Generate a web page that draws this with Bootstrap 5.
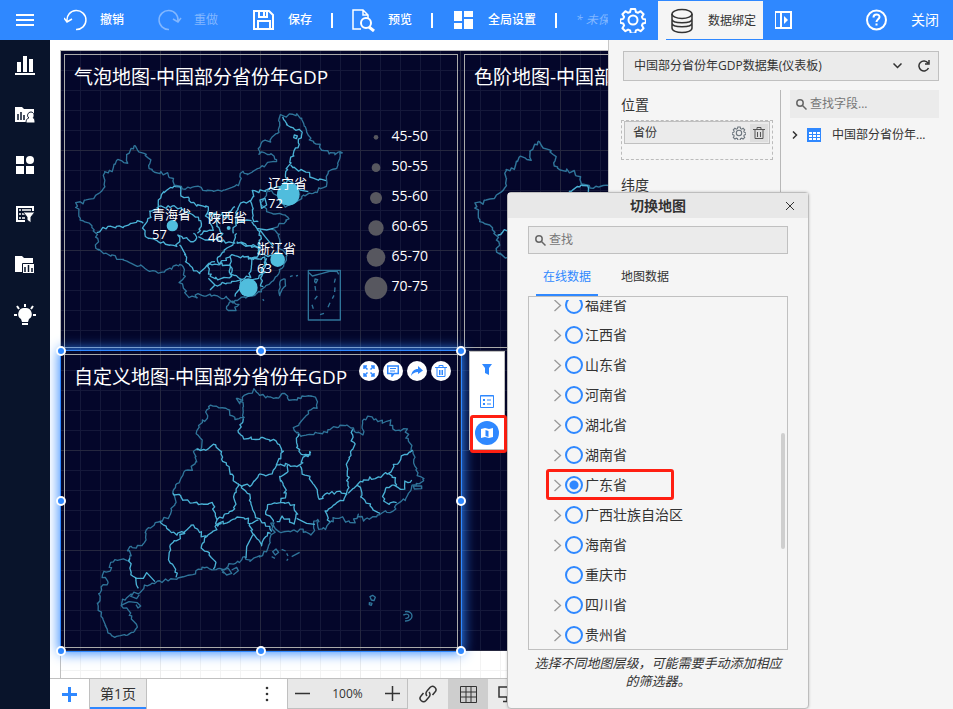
<!DOCTYPE html>
<html lang="zh-CN">
<head>
<meta charset="utf-8">
<meta name="viewport" content="width=device-width, initial-scale=1">
<title>仪表板设计器</title>
<link href="https://cdn.jsdelivr.net/npm/bootstrap@5.3.0/dist/css/bootstrap.min.css" rel="stylesheet">
<style>
:root{--blue:#2f88ff;--panel:#f5f5f5;--line:#c0c0c0;--field:#ebebeb}
body{font-family:"Open Sans","Noto Sans CJK SC",sans-serif;font-size:12px;line-height:18px;color:#333;background:#fff}
button{border:0;background:none;padding:0;color:inherit;font-size:inherit}
svg{display:block;flex:none}
.ic{fill:none;stroke:currentColor;stroke-width:2}
.topbar{height:40px;background:var(--blue);color:#fff}
.tools{min-width:0}
.menu-btn{width:50px;margin-right:14px}
.tool{gap:12px;flex:none;font-weight:500}
.tool.off{color:#82b7ff;font-weight:400}
.gap-tools{gap:34px}
.vsep{width:2px;height:15px;background:#fff;margin:0 19px;flex:none}
.side-w{width:345px}
.gear-btn{width:50px}
.bind-tab{background:var(--panel);color:#333;width:105px;padding:0 7px 0 11px;margin-top:1px;position:relative}
.bind-tab::after{content:"";position:absolute;left:8px;right:0;bottom:0;height:1px;background:var(--blue)}
.exit-btn{margin:0 14px 0 24px}
.rail{width:50px;background:#09142b;color:#fff}
.rail button{height:50px}
.below,.work,.stage{min-width:0;min-height:0}
.stage{padding:10px 0 0 10px}
.board{height:100%;min-width:800px;border-left:1px solid var(--line);border-top:1px solid var(--line);background-image:linear-gradient(90deg,#ececec 1px,transparent 1px),linear-gradient(#ececec 1px,transparent 1px),linear-gradient(90deg,#f3f3f3 1px,transparent 1px),linear-gradient(#f3f3f3 1px,transparent 1px);background-size:100px 100px,100px 100px,20px 20px,20px 20px;background-position:-1px -1px}
.tiles{display:grid;grid-template-columns:repeat(2,400px);grid-auto-rows:300px;width:801px;margin:-1px 0 0 -1px;background-color:#04062a;background-image:linear-gradient(90deg,#25273f 1px,transparent 1px),linear-gradient(#25273f 1px,transparent 1px),linear-gradient(90deg,#15183a 1px,transparent 1px),linear-gradient(#15183a 1px,transparent 1px);background-size:100px 100px,100px 100px,20px 20px,20px 20px;box-shadow:inset 1px 1px #bbb;padding-bottom:1px;color:#fff}
.tile{position:relative;padding:4px 2px 2px 4px}
.frame{border:1px solid #aaa;height:100%;padding:9px}
.tile h2{font-size:19px;line-height:26px;font-weight:400;margin:0;white-space:nowrap}
.chart{position:absolute;left:0;top:0;width:100%;height:100%}
.outer,.inner{fill:none;stroke:#2f7499;stroke-width:4;stroke-linejoin:round}
.inner{stroke:#4ab2d6}
.bub{fill:#50bddd}
.pin{position:absolute;font-size:13px;line-height:20px;white-space:nowrap}
.legend{position:absolute;right:32px;top:71px;font-size:14px}
.legend li{height:30px}
.sel{position:absolute;inset:1px -1px -1px 1px;outline:1px solid var(--blue);box-shadow:0 0 12px 2px var(--blue);pointer-events:none;z-index:2}
.knob{position:absolute;width:10px;height:10px;border-radius:50%;background:var(--blue);border:2px solid #fff;transform:translate(-50%,-50%)}
.acts{position:absolute;right:9px;top:11px;gap:4px;z-index:3}
.acts button{width:20px;height:20px;border-radius:50%;background:#fff;color:var(--blue)}
.float-bar{position:absolute;left:409px;top:1px;width:36px;border:1px solid var(--line);background:#fff;color:var(--blue);z-index:3;padding:1px 0 0}
.float-bar button{height:32px}
.float-bar .on{width:24px;height:24px;border-radius:50%;background:var(--blue);color:#fff;margin:4px 0}
.redbox{position:absolute;border:3px solid #ff1f12;border-radius:3px;pointer-events:none}
.float-bar .redbox{left:0;right:-3px;top:63px;height:38px}
.footbar{height:31px;border-top:1px solid var(--line);background:#fff}
.footbar>*{flex:none}
.add-btn{width:39px;color:var(--blue)}
.page-tab{width:58px;background:#e8e8e8;border:1px solid var(--line);border-width:0 1px;box-shadow:inset 0 -2px var(--blue);font-size:14px}
.more-btn{margin-left:118px;padding-right:18px}
.zoombar{width:121px;background:#e8e8e8;border:1px solid var(--line);border-top:0;padding:0 7px}
.cell{width:40px;background:#ebebeb}
.cell.on{background:#cecece}
.footbar .rest{flex:1}
.panel{background:var(--panel);border-left:1px solid #c8c8c8;padding:11px 14px 0}
.source{height:30px;background:var(--field);border:1px solid var(--line);padding-right:8px}
.source select{appearance:none;border:0;background:none;color:#333;padding:0 10px;min-width:0}
.lab{font-size:14px;line-height:20px}
.fields{width:160px;margin:9px 0 0 -2px;border-right:1px solid #b8b8b8;padding-top:5px;flex:none}
.drop{border:1px dashed #bbb;height:40px;margin:5px 7px 15px 0;padding:0 2px}
.chip{height:23px;background:var(--field);border:1px solid var(--line);padding:0 1px 0 8px}
.chip .bin{width:18px;height:18px;background:#dedede;color:#555}
.tree{padding:9px 0 0 9px;min-width:0}
.tree-row{padding:8px 0 0 2px;overflow:hidden}
.srch{background:var(--field);height:28px;padding:0 6px;gap:3px;color:#666}
.srch input{border:0;background:none;min-width:0;width:100%;outline:0;padding:0}
.srch input::placeholder{color:#777;opacity:1}
.dlg{position:absolute;right:144px;top:192px;bottom:0;width:302px;background:var(--panel);border:1px solid #bdbdbd;border-radius:4px;box-shadow:0 0 3px #0003;z-index:10}
.dlg-h{height:25px;background:#e8e8e8;font-size:14px;padding:0 14px 0 22px}
.dlg-b{padding:8px 20px 0;min-height:0}
.dlg-b .srch{border:1px solid var(--line)}
.tabs{height:42px;padding-left:8px;gap:23px}
.tabs button{padding-top:4px}
.tabs .cur{width:62px;color:var(--blue);border-bottom:2px solid var(--blue);padding-top:6px}
.listbox{border:1px solid var(--line);height:354px;padding-top:3px;position:relative}
.provs{overflow:hidden;height:100%}
.provs ul{margin:-10px 0 0}
.provs li{height:30px;padding-left:24px;font-size:14px;color:#333;position:relative}
.provs svg{width:10px;margin-right:2px;stroke-width:1.300;color:#999}
.provs input{appearance:none;width:18px;height:18px;border:2px solid var(--blue);border-radius:50%;margin:0 2px 0 0;flex:none}
.provs input:checked{background:radial-gradient(circle,var(--blue) 4px,transparent 5px)}
.provs .redbox{left:17px;width:128px;top:-1px;height:31px}
.thumb{position:absolute;right:2px;top:136px;width:4px;height:116px;border-radius:2px;background:#cfcfcf}
.note{font-size:13px;font-style:italic;text-align:center;margin:4px}
.thin{stroke-width:1}
.mid{stroke-width:1.500}
</style>
<script src="https://cdn.jsdelivr.net/npm/bootstrap@5.3.0/dist/js/bootstrap.bundle.min.js"></script>
</head>
<body class="vh-100 d-flex flex-column overflow-hidden position-relative">

<header class="topbar d-flex">
  <div class="tools d-flex align-items-center flex-fill overflow-hidden text-nowrap">
    <button class="menu-btn d-flex justify-content-center flex-shrink-0" aria-label="菜单"><svg class="ic" width="18" height="14"><path d="M0 2h18M0 7h18M0 12h18"/></svg></button>
    <div class="d-flex gap-tools">
      <button class="tool d-flex align-items-center"><svg class="ic mid" width="24" height="24"><path d="M3 13A9.500 9.500 0 1 1 12 21.500M0 10l3 4 5-3"/></svg>撤销</button>
      <button class="tool off d-flex align-items-center"><svg class="ic mid" width="24" height="24"><path d="M20 13A9.500 9.500 0 1 0 11 21.500M15 11l5 3 3-4"/></svg>重做</button>
      <button class="tool d-flex align-items-center"><svg class="ic" width="24" height="24"><path d="M2 3h15l4 4v14H2zM6 21v-8h12v8M7 3v6h8V3M12 4v4"/></svg>保存</button>
    </div>
    <span class="vsep"></span>
    <button class="tool d-flex align-items-center"><svg class="ic mid" width="24" height="24"><path d="M9 21H1V2h10l5 5v3M11 2v5h5"/><circle cx="14" cy="15" r="5" stroke-width="2"/><path d="M17 19l5 4" stroke-width="3"/></svg>预览</button>
    <span class="vsep"></span>
    <button class="tool d-flex align-items-center"><svg width="24" height="24" fill="currentColor"><path d="M2 3h8v10H2zM2 15h8v6H2zM12 3h9v6h-9zM12 11h9v10h-9z"/></svg>全局设置</button>
    <span class="vsep"></span>
    <em class="tool off">* 未保存</em>
  </div>
  <div class="side-w d-flex flex-shrink-0">
    <button class="gear-btn d-flex align-items-center justify-content-center" aria-label="设置"><svg class="ic" width="26" height="26"><circle cx="13" cy="13" r="4.500"/><path d="M10.800 2h4.400l.7 3 2 .8 2.700-1.600 3 3-1.700 2.700.9 2 3 .7v3.200l-3 .7-.9 2 1.700 2.700-3 3-2.700-1.600-2 .8-.7 3h-4.400l-.7-3-2-.8-2.700 1.600-3-3 1.700-2.700-.9-2-3-.7v-3.200l3-.7.9-2-1.700-2.700 3-3 2.700 1.600 2-.8z" stroke-linejoin="round"/></svg></button>
    <button class="bind-tab d-flex align-items-center justify-content-between"><svg class="ic mid" width="26" height="26"><ellipse cx="13" cy="6" rx="10" ry="4.500"/><path d="M3 6v14c0 6 20 6 20 0V6M3 11c0 5 20 5 20 0M3 15c0 5 20 5 20 0"/></svg>数据绑定</button>
    <button class="d-flex align-items-center ps-2 ms-1" aria-label="收起面板"><svg class="ic" width="18" height="18"><path d="M0 1h16v16H0zM6 1v16"/><path d="M9 5l4 4-4 4z" fill="currentColor" stroke="none"/></svg></button>
    <button class="d-flex align-items-center ms-auto" aria-label="帮助"><svg class="ic" width="21" height="22"><circle cx="10.500" cy="11" r="9.500"/><path d="M7.500 8.500c0-4 6-4 6-.5 0 2-3 2.500-3 5M10.500 14.500v2"/></svg></button>
    <button class="exit-btn lab">关闭</button>
  </div>
</header>

<div class="below d-flex flex-fill">
  <nav class="rail d-flex flex-column flex-shrink-0">
    <button class="d-flex align-items-center justify-content-center" aria-label="图表"><svg width="20" height="20" fill="currentColor"><path d="M0 18h20v2H0zM2 7h4v10H2zM8 1h4v16H8zM14 4h4v13h-4z"/></svg></button>
    <button class="d-flex align-items-center justify-content-center" aria-label="我的图表"><svg width="20" height="20" fill="currentColor"><path d="M0 2h7l2 2h10v13H0z"/><path d="M3 9v6M6 7v8M9 10v5" stroke="#09142b" stroke-width="1.500"/><path d="M11 18c0-4 2-5 3-5-3-2-1-6 2-6s4 4 2 6c1 0 2 1 2 5z" stroke="#09142b"/></svg></button>
    <button class="d-flex align-items-center justify-content-center" aria-label="组件"><svg width="20" height="20" fill="currentColor"><path d="M1 1h8v8H1zM1 11h8v8H1zM11 11h8v8h-8z"/><circle cx="15" cy="5" r="4"/></svg></button>
    <button class="d-flex align-items-center justify-content-center" aria-label="筛选"><svg class="ic" width="20" height="20"><path d="M18 6V2H2v14h8"/><path d="M4 5h2M7 5h9M4 9h2M7 9h3M4 13h2M7 13h3" stroke-width="1.500"/><path d="M8 7h12l-4 5v6l-4-3v-3z" fill="currentColor" stroke="#09142b" stroke-width="1"/></svg></button>
    <button class="d-flex align-items-center justify-content-center" aria-label="资源"><svg width="22" height="20" fill="currentColor"><path d="M1 1h7l2 2h9v14H1z"/><path d="M8.500 8.500h12v10h-12z" stroke="#09142b"/><path d="M11 12v5M14.500 10v7M18 13v4" stroke="#09142b" stroke-width="1.500"/></svg></button>
    <button class="d-flex align-items-center justify-content-center" aria-label="提示"><svg width="24" height="24" fill="currentColor"><path d="M12 5a6 6 0 0 0-4 11l1 3h6l1-3a6 6 0 0 0-4-11zM9 20h6v2H9z"/><path d="M12 1v3M1 12h3M20 12h3M4 3l2 3M20 3l-2 3" stroke="currentColor" stroke-width="2"/></svg></button>
  </nav>

  <main class="work flex-fill d-flex flex-column">
    <div class="stage flex-fill overflow-hidden">
      <div class="board">
        <div class="tiles">
          <section class="tile">
            <div class="frame"><h2>气泡地图-中国部分省份年GDP</h2></div>
            <svg class="chart" viewBox="0 -150 1200 900" aria-hidden="true">
              <defs>
                <g id="cn" class="border-lines">
                  <path class="outer" d="M222 137l7 0 2 13 14 2 20 20 5 13-2 23 22 7 28 7 24 21 0 15 33 6 43-2 37 15 55-11 22-8 9-18-1-20 8-5 12 7 20-9 30-11 20-15 20-3-2-14-16-8-20-4-17 2 13-38 17 5 15-17 15-20 0-30 8-12 22-2 25-1 18 17 12 23 12 40 23 5 20 25 25 10 27-13-7 23-15 35-20 2-7 20 2 30-20 3-10 15-20-3-20 13-10 10-20 15-20 3-20-8-5-20-25-20-20 30-10 10 20 20 25 15 15-5 30 12-30 23-20 10 15 20 10 25-10 15 20 10 5 25-10 20-15 15-15 25-30 25-20 15-30 10-20 5-22 13-13-15-40-3-15-5-40 0 0 13-15-8-15 3-2-18-18-25 12-15-2-40-25 5-45 18-30-5-20-8-10-10-30 0-15-12-50-18-35-20 2-40-12-15-10-17-30-18 0-15-15-15 5-12 50-18 30-22 7-18-7-37 28-5 10-33 32 5 3-25z"/>
                  <path class="outer" d="M660 545l15-10-3 25-12 23-5-13zM505 615l15-10 15 7-10 20-17 3-8-10zM608 598l4 4M690 530l8-3M708 528l6-2"/>
                  <path class="inner" d="M110 398l20-13 20-3 30-2 35-10 20-5 15 5M342 258l-22 10-20 22-10 35-25 10 5 20-20 17 5 33 15 13 30 7 40 15 12-5 6-30 17 10 15 10 25-15-15-10M290 325l40-7 30 7 35 20 25 15 8 15-16 25M342 258l13 4 7 18 8 10 15 0 10 20 30 8 20 0-5 27 10 15M668 50l7 20 25 20 20 0 8 10-13 25-5 25-20 30 2 15-14 10 4 35M692 195l23 17 30 3 15 20 38 7M682 240l18 10 20 20 25 5M682 240l-22 22-35 3-25 10-20-5-5 30 5 30-5 30 20 5M600 300l15-5 5 20-15 10zM703 105l9 3-3 8-8-3zM575 300l-30 10-15 30-5 35-5 25M525 370l35-10 15 2M525 320l-30 35-15-15-10 35 20 25-25 20 25 5 30 5 10-30M440 340l25 5-15 25 10 20-20 5-20 10M575 365l25 25 0 30-10 20-35-5-25-10M590 385l30 5 20-5M600 390l15 20 25 30M600 420l-5 35 25 15 30-15M530 430l60 10 10 25-30 10-50-10-10 5-30 20-15-10 10-15 25-15 20-20M510 470l5 55 25 10 30-5 2-55 48 0-20 55-25 10M445 495l35-5 30 10 2 30-32 10-30-10zM358 435l12 5 8 50 17 10 20 20 15-20 15-10 20-5M415 410l20 10 30 0M445 535l20 20-15 15M465 555l47-10 28-5 5 20-20 30M620 475l-10 45-10 40 10 0"/>
                </g>
              </defs>
              <use href="#cn"/>
              <path d="M745 511h96v149h-96z" class="outer"/>
              <path d="M747 518l10 10 30-8 25-7 20 2 4 8M765 537l8 2-5 10-4-4zM765 558l2 14M772 588l-8 10M756 614l4 12M826 536l-3 12M825 562l-1 14M822 586l-5 10M810 608l-6 14M792 640l-12 4" class="outer"/>
              <g class="bub"><circle cx="685" cy="283" r="34"/><circle cx="337" cy="377" r="17"/><circle cx="506" cy="384" r="6"/><circle cx="653" cy="479" r="22"/><circle cx="565" cy="563" r="28"/></g>
              <g fill="#57575f"><circle cx="948" cy="112" r="7"/><circle cx="948" cy="203" r="13"/><circle cx="948" cy="294" r="18"/><circle cx="948" cy="384" r="23"/><circle cx="948" cy="472" r="28"/><circle cx="948" cy="564" r="34"/></g>
            </svg>
            <div class="pin" style="left:208px;top:123px">辽宁省<br>72</div>
            <div class="pin" style="left:92px;top:154px">青海省<br>57</div>
            <div class="pin" style="left:148px;top:157px">陕西省<br>46</div>
            <div class="pin" style="left:197px;top:188px">浙江省<br>63</div>
            <ul class="legend list-unstyled mb-0">
              <li class="d-flex align-items-center">45-50</li><li class="d-flex align-items-center">50-55</li><li class="d-flex align-items-center">55-60</li><li class="d-flex align-items-center">60-65</li><li class="d-flex align-items-center">65-70</li><li class="d-flex align-items-center">70-75</li>
            </ul>
          </section>
          <section class="tile">
            <div class="frame"><h2>色阶地图-中国部分省份年GDP</h2></div>
            <svg class="chart" viewBox="0 0 1200 900" aria-hidden="true"><use href="#cn" transform="translate(-6 126) scale(1.08)"/></svg>
          </section>
          <section class="tile">
            <div class="frame"><h2>自定义地图-中国部分省份年GDP</h2></div>
            <svg class="chart" viewBox="30 30 1200 900" aria-hidden="true">
              <g class="border-lines">
              <path class="outer" d="M558 175L580 178 595 160 610 150 625 158 640 172 670 174 690 170 700 157 708 160 712 182 760 172 780 163 800 180 805 190 795 205 765 225 750 255 730 268 745 280 755 290 790 280 820 278 850 265 890 252 908 268 930 280 945 282 935 260 940 240 955 232 980 240 1000 248 1018 240 1035 272 1070 268 1072 290 1088 330 1095 370 1105 405 1123 418 1110 430 1085 440 1070 475 1040 488 1035 512 990 520 960 535 940 540 922 525 910 550 885 540 865 530 840 545 825 568 805 565 805 535 790 545 790 580 770 580 760 568 720 575 690 583 675 560 665 545 672 575 655 610 650 635 620 655 595 663 582 650 570 665 545 670 530 685 490 687 470 678 445 690 430 705 375 715 320 727 290 735 270 755 240 765 215 785 212 797 235 805 245 830 255 850 262 862 250 880 215 888 180 890 175 870 160 845 150 815 143 795 150 765 158 735 175 728 155 700 180 690 185 665 235 658 240 640 235 620 275 620 285 600 285 570 330 545 360 525 375 485 368 460 385 425 410 390 425 388 440 365 432 330 455 328 455 300 440 275 450 250 468 240 475 195 535 203 550 235 580 235 580 190 560 185z"/>
              <path class="outer" d="M212 797l25-12 25 3 10 10-8 6-6-10M240 768l20 8 8-12M515 690l20-5 10 15-15 5zM545 690l15-8 5 10-15 12M522 700l-6-5M668 635l10-8 8 10-10 8zM695 628l12 5M710 640l4 8M665 650l10 5M725 650l24-13M710 662l4-5M960 770l8-4 8 6-4 10-8-2zM958 788l8 2-2 6-6-2zM1090 438l25 0 0 8-22 1z"/>
              <path class="outer" d="M1065 815c28-5 28 30 0 28M1060 825l6-2c14-4 14 14 0 12"/>
              <path class="inner" d="M580 235L565 275 585 295 650 293 680 305 698 335 680 375 718 375M680 375L660 405 630 403 600 435 575 440M440 330L470 333 488 310 508 330 520 365 540 385 550 420 575 440 600 470 615 525 640 545 665 575M565 430L550 465 555 505 500 540M368 460L390 465 395 480 450 490 488 490 497 535 505 560 515 550M330 545L360 570 375 582 405 575 425 553 445 565 455 585 470 590 495 570 505 548 545 545 560 530 590 535 600 550 625 540M405 578L365 610 357 655 375 690 378 712M470 590L455 605 455 625 480 640 495 665 490 687M240 655L237 690 255 715 265 745M255 715L280 715 290 698 315 725M600 550L608 580 635 615 645 585 662 580M608 585L590 620 588 655M745 282L740 320 750 340 770 345 785 332 775 345 765 350 750 378 718 375M714 375L712 395 688 415 705 440 705 465 690 487 650 495 650 520 670 545M690 487L730 495 740 520 735 550 700 530 680 545M740 535L770 550 795 553M750 378L752 395 785 420 800 450 815 480 830 460 880 455 892 463M908 268L905 290 912 320 890 370 895 410 892 463 870 485 825 515 840 545M1088 330L1060 345 1035 375 1015 400 975 412 940 420 920 435 895 460M920 435L935 450 935 475 960 490 965 510 990 520M1015 400L1040 415 1040 440 1060 445 1065 425 1085 420M1040 440L1010 440 1000 480 1015 495 1040 488"/>
              </g>
            </svg>
            <div class="sel"><i class="knob" style="left:0;top:0"></i><i class="knob" style="left:50%;top:0"></i><i class="knob" style="left:100%;top:0"></i><i class="knob" style="left:0;top:50%"></i><i class="knob" style="left:100%;top:50%"></i><i class="knob" style="left:0;top:100%"></i><i class="knob" style="left:50%;top:100%"></i><i class="knob" style="left:100%;top:100%"></i></div>
            <div class="acts d-flex">
              <button class="d-flex align-items-center justify-content-center" aria-label="放大"><svg class="ic mid" width="12" height="12"><path d="M1 4V1h3M8 1h3v3M11 8v3H8M4 11H1V8M1 1l3.500 3.500M11 1L7.500 4.500M11 11L7.500 7.500M1 11l3.500-3.500"/></svg></button>
              <button class="d-flex align-items-center justify-content-center" aria-label="批注"><svg class="ic" width="12" height="12"><path class="mid" d="M.7 1h10.600v7.500H7L5 11V8.500H.7z"/><path class="thin" d="M3 3.500h6M3 6h5"/></svg></button>
              <button class="d-flex align-items-center justify-content-center" aria-label="分享"><svg width="12" height="12" fill="currentColor"><path d="M7 1l5 4.500L7 9V7C4 7 2 8 0 11 1 6 3 4 7 4z"/></svg></button>
              <button class="d-flex align-items-center justify-content-center" aria-label="删除"><svg class="ic thin" width="12" height="12"><path d="M0 2.500h12M4 2V.5h4V2M2 3v8.500h8V3M4.500 5v5M6 5v5M7.500 5v5"/></svg></button>
            </div>
            <div class="float-bar d-flex flex-column align-items-center">
              <button class="d-flex align-items-center" aria-label="筛选器"><svg width="10" height="11" fill="currentColor"><path d="M0 0h10L7 4v7L3 9V4z"/></svg></button>
              <button class="d-flex align-items-center" aria-label="图例"><svg class="ic thin" width="14" height="14"><path d="M.5 1.500h13v12H.5zM.5 2h13M7 6h4M7 10h4"/><path d="M3 6h2M3 10h2" stroke-width="2"/></svg></button>
              <button class="on d-flex align-items-center justify-content-center" aria-label="切换地图"><svg width="12" height="12" fill="currentColor"><path d="M0 2l4-1 4 1 4-1v9l-4 1-4-1-4 1zM4.500 3v6l3 1V4z" fill-rule="evenodd"/></svg></button>
              <span class="redbox"></span>
            </div>
          </section>
        </div>
      </div>
    </div>
    <footer class="footbar d-flex overflow-hidden">
      <button class="add-btn d-flex align-items-center justify-content-center" aria-label="新增页"><svg class="ic" width="15" height="15"><path d="M0 7.500h15M7.500 0v15" stroke-width="3"/></svg></button>
      <button class="page-tab">第1页</button>
      <button class="more-btn d-flex align-items-center" aria-label="更多"><svg width="4" height="16" fill="currentColor"><circle cx="2" cy="2" r="1.300"/><circle cx="2" cy="8" r="1.300"/><circle cx="2" cy="14" r="1.300"/></svg></button>
      <div class="zoombar d-flex align-items-center justify-content-between">
        <button aria-label="缩小"><svg class="ic mid" width="15" height="15"><path d="M0 7.500h15"/></svg></button><span>100%</span><button aria-label="放大"><svg class="ic mid" width="15" height="15"><path d="M0 7.500h15M7.500 0v15"/></svg></button>
      </div>
      <button class="cell d-flex align-items-center justify-content-center" aria-label="链接"><svg class="ic mid" width="18" height="18"><path d="M8 11a3.500 3.500 0 0 1 0-5l3-3.500a3.200 3.200 0 0 1 5 4.500l-2.500 3M10 7a3.500 3.500 0 0 1 0 5l-3 3.500a3.200 3.200 0 0 1-5-4.500l2.500-3"/></svg></button>
      <button class="cell on d-flex align-items-center justify-content-center" aria-label="网格"><svg class="ic thin" width="17" height="17"><path d="M.5.500h16v16H.5zM.5 6h16M.5 11h16M6 .5v16M11 .5v16"/></svg></button>
      <button class="cell rest d-flex align-items-center ps-2" aria-label="屏幕"><svg class="ic mid" width="20" height="17"><path d="M3 1h16v10H3zM11 11v4M7 15.500h8"/></svg></button>
    </footer>
  </main>

  <aside class="panel side-w flex-shrink-0 d-flex flex-column">
    <div class="source d-flex align-items-center">
      <select class="flex-fill" aria-label="数据集"><option>中国部分省份年GDP数据集(仪表板)</option></select>
      <svg class="ic mid" width="9" height="6"><path d="M.5.500l4 4 4-4"/></svg>
      <button class="ms-3" aria-label="刷新"><svg class="ic mid" width="12" height="14"><path d="M10.500 9a5 5 0 1 1-.5-5M11 1v4H7"/></svg></button>
    </div>
    <div class="d-flex flex-fill">
      <div class="fields">
        <div class="lab">位置</div>
        <div class="drop"><div class="chip d-flex align-items-center">省份
          <button class="ms-auto me-1" aria-label="字段设置"><svg class="ic text-secondary" width="14" height="14" viewBox="0 0 26 26"><circle cx="13" cy="13" r="5"/><path d="M10.800 2h4.400l.7 3 2 .8 2.700-1.600 3 3-1.700 2.700.9 2 3 .7v3.200l-3 .7-.9 2 1.700 2.700-3 3-2.700-1.600-2 .8-.7 3h-4.400l-.7-3-2-.8-2.700 1.600-3-3 1.700-2.700-.9-2-3-.7v-3.200l3-.7.9-2-1.700-2.700 3-3 2.700 1.600 2-.8z"/></svg></button>
          <button class="bin d-flex align-items-center justify-content-center" aria-label="移除字段"><svg class="ic thin" width="12" height="12"><path d="M0 2.500h12M4 2V.5h4V2M2 3v8.500h8V3M4.500 5v5M7.500 5v5"/></svg></button></div></div>
        <div class="lab">纬度</div>
      </div>
      <div class="tree flex-fill">
        <label class="srch d-flex align-items-center"><svg class="ic mid" width="11" height="11"><circle cx="4" cy="4" r="3.200"/><path d="M6.500 6.500l4 4"/></svg><input type="text" placeholder="查找字段..." aria-label="查找字段"></label>
        <div class="tree-row d-flex align-items-center text-nowrap"><svg class="ic mid" width="6" height="8"><path d="M1 .5l3.500 3.500L1 7.500"/></svg><svg class="ms-2" width="26" height="14"><path d="M1 0h14v14H1z" fill="#2f88ff"/><path d="M3 4h3v2H3zM7 4h3v2H7zM11 4h3v2h-3zM3 7h3v2H3zM7 7h3v2H7zM11 7h3v2h-3zM3 10h3v2H3zM7 10h3v2H7zM11 10h3v2h-3z" fill="#fff"/></svg>中国部分省份年...</div>
      </div>
    </div>
  </aside>
</div>

<div class="dlg d-flex flex-column" role="dialog" aria-labelledby="dlgTitle">
  <div class="dlg-h d-flex align-items-center flex-shrink-0"><span id="dlgTitle" class="flex-fill text-center fw-semibold">切换地图</span>
    <button aria-label="关闭窗口"><svg class="ic thin" width="8" height="8"><path d="M0 0l8 8M8 0L0 8"/></svg></button></div>
  <div class="dlg-b">
    <label class="srch d-flex align-items-center"><svg class="ic mid" width="11" height="11"><circle cx="4" cy="4" r="3.200"/><path d="M6.500 6.500l4 4"/></svg><input type="text" placeholder="查找" aria-label="查找"></label>
    <div class="tabs d-flex"><button class="cur">在线数据</button><button>地图数据</button></div>
    <div class="listbox"><div class="provs"><ul class="list-unstyled" id="provs"></ul></div><span class="thumb"></span></div>
    <p class="note">选择不同地图层级，可能需要手动添加相应的筛选器。</p>
  </div>
</div>

<script>
const names = ["福建省","江西省","山东省","河南省","湖北省","湖南省","广东省","广西壮族自治区","海南省","重庆市","四川省","贵州省"];
document.getElementById("provs").innerHTML = names.map((n, i) => {
  const arrow = n === "重庆市" ? "" : '<path d="M1.500 1l6 5.500-6 5.500"/>';
  const on = n === "广东省";
  return `<li class="d-flex align-items-center"><svg class="ic" height="13">${arrow}</svg><input type="radio" name="prov" id="p${i}"${on ? " checked" : ""}><label for="p${i}">${n}</label>${on ? '<span class="redbox"></span>' : ""}</li>`;
}).join("");

// Roughen the simplified boundaries: each piece is resampled and nudged by a repeatable noise.
const noise = n => { const s = Math.sin(n * 12.9898) * 43758.5453; return (s - Math.floor(s) - .5) * 10; };
const probe = document.createElementNS("http://www.w3.org/2000/svg", "path");
document.querySelectorAll(".border-lines path").forEach(path => {
  const pieces = path.getAttribute("d").split("M").filter(Boolean);
  path.setAttribute("d", pieces.map(piece => {
    probe.setAttribute("d", "M" + piece);
    const len = probe.getTotalLength();
    if (len < 90) return "M" + piece;
    const steps = Math.round(len / 8);
    let out = "";
    for (let i = 0; i <= steps; i++) {
      const p = probe.getPointAtLength(len * i / steps);
      const k = i === 0 || i === steps ? 0 : 1;
      out += (i ? "L" : "M") + (p.x + k * noise(i + len)).toFixed(1) + " " + (p.y + k * noise(i * 3 + len + 7)).toFixed(1);
    }
    return out;
  }).join(""));
});
</script>
</body>
</html>
